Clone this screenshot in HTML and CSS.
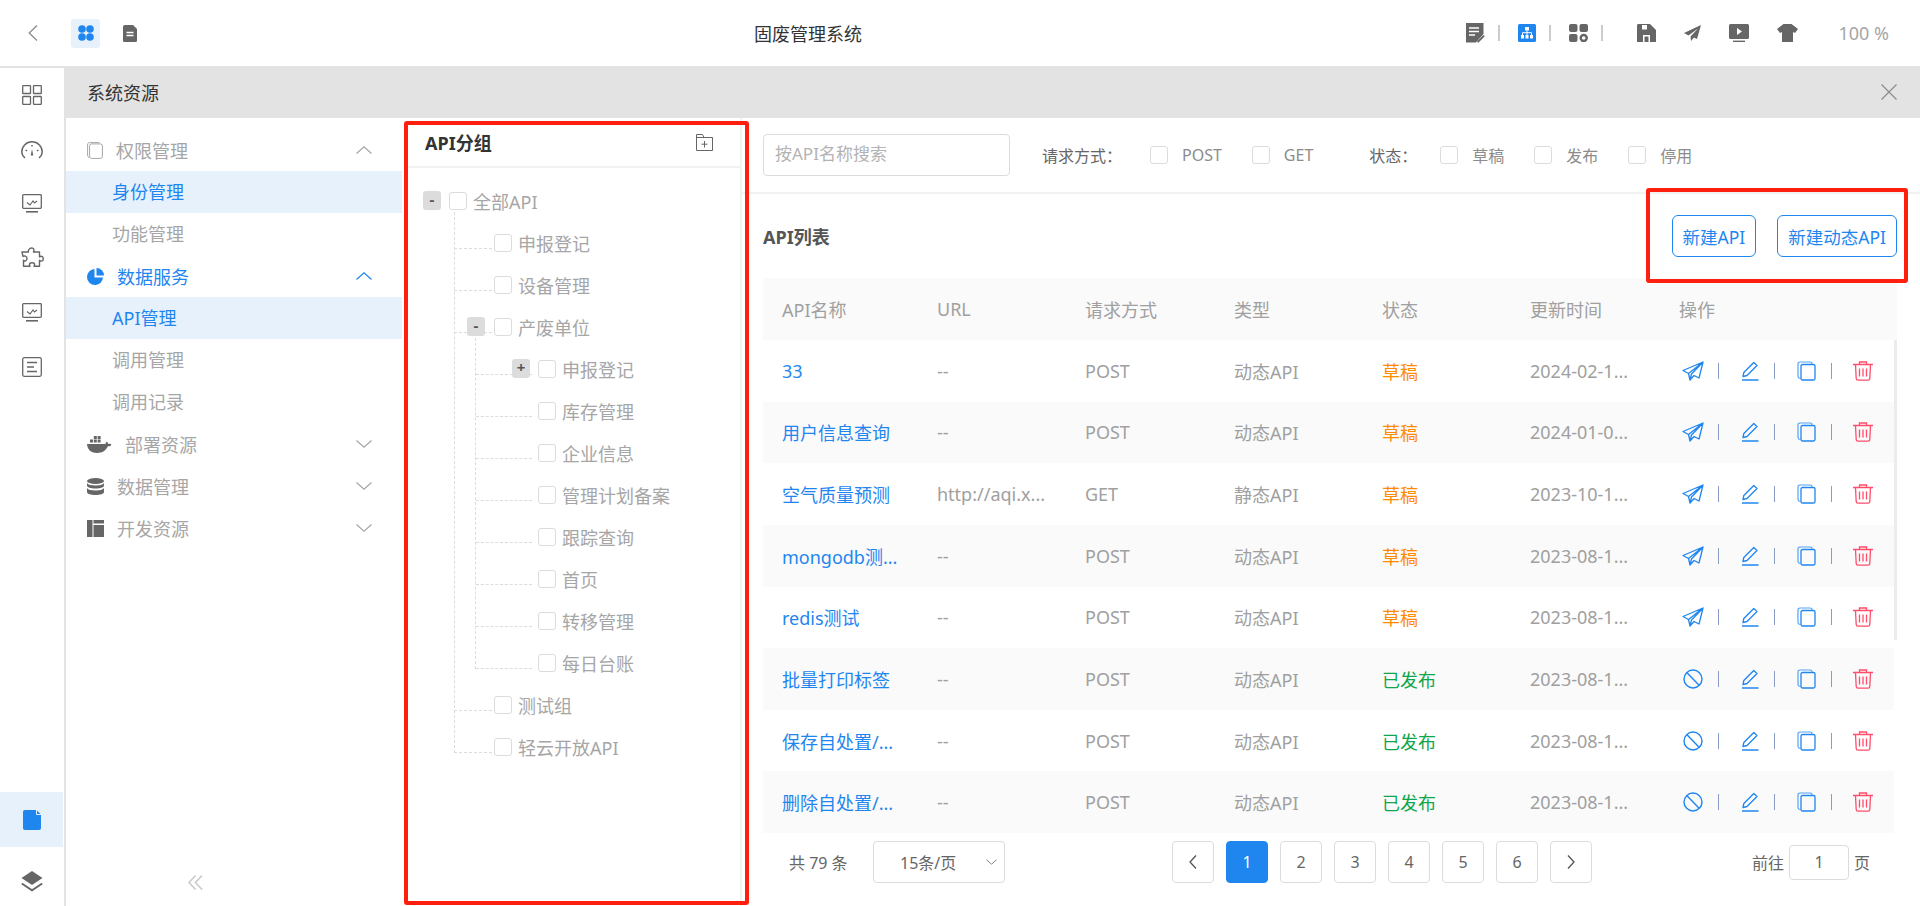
FILE: index.html
```html
<!DOCTYPE html>
<html>
<head>
  <meta charset="utf-8">
  <title>固废管理系统</title>
  <link rel="stylesheet" href="styles.css">
</head>
<body>
  <!-- shared row icons -->
  <svg class="defs" aria-hidden="true">
    <symbol id="i-send" viewBox="0 0 22 20"><path d="M21 1 1 9.500l5.500 3L8 19l4-4.500 5 2.500zM21 1 6.500 12.500 8 19l1.500-6z" fill="none" stroke="currentColor" stroke-width="1.300" stroke-linejoin="round"/></symbol>
    <symbol id="i-ban" viewBox="0 0 20 20"><circle cx="10" cy="10" r="9" fill="none" stroke="currentColor" stroke-width="1.400"/><path d="m3.800 3.500 12.500 13" stroke="currentColor" stroke-width="1.400"/></symbol>
    <symbol id="i-edit" viewBox="0 0 17 20"><path d="M11.800 1.500 15 4.500 5 14.500l-4 1 .8-4zM0 19h16.500" fill="none" stroke="currentColor" stroke-width="1.300" stroke-linejoin="round"/></symbol>
    <symbol id="i-copy" viewBox="0 0 19 20"><path d="M3.500 17.500C1.800 17.500 1 16.700 1 15V3c0-1.400.8-2 2-2h10c1.400 0 2 .7 2 1.700" fill="none" stroke="currentColor" stroke-width="1.200" opacity=".75"/><rect x="4" y="3.500" width="14" height="15.500" rx="1.500" fill="none" stroke="currentColor" stroke-width="1.300"/></symbol>
    <symbol id="i-trash" viewBox="0 0 22 20"><path d="M1 3.500h20M7.500 3.500V1h7v2.500M3.500 3.500l.7 14c0 1 .7 1.700 1.800 1.700h10c1.100 0 1.800-.7 1.800-1.700l.7-14M7.500 7.500v8M11 7.500v8M14.500 7.500v8" fill="none" stroke="currentColor" stroke-width="1.300"/></symbol>
    <symbol id="i-up" viewBox="0 0 16 8"><path d="M.5 7.500 8 .8l7.500 6.700" fill="none" stroke="currentColor" stroke-width="1.200"/></symbol>
    <symbol id="i-down" viewBox="0 0 16 8"><path d="M.5.5 8 7.200 15.500.5" fill="none" stroke="currentColor" stroke-width="1.200"/></symbol>
  </svg>

  <!-- top bar -->
  <header class="topbar">
    <div class="top-left">
      <svg class="back" width="10" height="16" viewBox="0 0 10 16"><path d="M9 .5 1.200 8 9 15.500" fill="none" stroke="#8c8c8c" stroke-width="1.300"/></svg>
      <div class="tab-on">
        <svg width="16" height="16" viewBox="0 0 16 16" fill="#1f86f0"><circle cx="4" cy="4" r="3.800"/><circle cx="12" cy="4" r="3.800"/><circle cx="4" cy="12" r="3.800"/><circle cx="12" cy="12" r="3.800"/></svg>
      </div>
      <svg class="tab-doc" width="14" height="17" viewBox="0 0 14 17"><path d="M2 0h8l4 4v11.500c0 1-.6 1.500-1.500 1.500h-11C.6 17 0 16.500 0 15.500V2C0 .8.800 0 2 0z" fill="#666"/><path d="M3.500 7.500h7M3.500 10.500h7" stroke="#fff" stroke-width="1.400"/></svg>
    </div>
    <div class="top-title">固废管理系统</div>
    <div class="top-right">
      <svg width="19" height="20" viewBox="0 0 19 20"><path d="M0 0h17.500v11L10 19.500H0z" fill="#666"/><path d="M3 5h10M3 8.500h10M3 12h6" stroke="#fff" stroke-width="1.300"/><path d="m11 18.500 6.500-6.500 1.300 1.300-6.500 6.500z" fill="#666"/></svg>
      <i class="top-sep"></i>
      <svg width="18" height="18" viewBox="0 0 18 18"><rect width="18" height="18" rx="1.500" fill="#1f86f0"/><path d="M7 3h4v3.500H7zM3 11h3v3.500H3zM7.500 11h3v3.500h-3zM12 11h3v3.500h-3z" fill="#fff"/><path d="M9 6.500V11M4.500 11V8.700h9V11" fill="none" stroke="#fff"/></svg>
      <i class="top-sep"></i>
      <svg width="19" height="18" viewBox="0 0 19 18" fill="#666"><rect width="8.500" height="8" rx="2"/><rect x="10.500" width="8.500" height="8" rx="2"/><rect y="10" width="8.500" height="8" rx="2"/><circle cx="14.700" cy="14" r="3" fill="none" stroke="#666" stroke-width="2.400"/></svg>
      <i class="top-sep"></i>
      <svg class="top-gap" width="19" height="18" viewBox="0 0 19 18"><path d="M0 1.500C0 .5.500 0 1.500 0H13l6 6v12H0z" fill="#666"/><path d="M5 1v4.500h5V1z" fill="#fff"/><path d="M6 18v-7h7v7z" fill="#fff"/><path d="M7.500 18v-5.500h4V18z" fill="#666"/></svg>
      <svg width="17" height="16" viewBox="0 0 17 16"><path d="M17 0 0 8l4.500 2.500L14 3.500 6.500 11.500 7 16l3-3.500 3 1.500z" fill="#666"/></svg>
      <svg width="20" height="18" viewBox="0 0 20 18"><rect width="20" height="15" rx="1.500" fill="#666"/><path d="M8 4v7l5-3.500z" fill="#fff"/><path d="M4 17.300h12" stroke="#666" stroke-width="1.400"/></svg>
      <svg width="21" height="18" viewBox="0 0 21 18"><path d="M6.500 0h8L21 5l-3 4-2-1v10H5V8L3 9 0 5z" fill="#666"/></svg>
      <span class="zoom-val">100 %</span>
    </div>
  </header>

  <div class="main">
    <!-- left icon rail -->
    <nav class="rail">
      <div class="rail-item">
        <svg width="20" height="20" viewBox="0 0 20 20" fill="none" stroke="#666" stroke-width="1.300"><rect x=".7" y=".7" width="7.800" height="7.800" rx=".6"/><rect x="11.500" y=".7" width="7.800" height="7.800" rx=".6"/><rect x=".7" y="11.500" width="7.800" height="7.800" rx=".6"/><rect x="11.500" y="11.500" width="7.800" height="7.800" rx=".6"/></svg>
      </div>
      <div class="rail-item">
        <svg width="22" height="18" viewBox="0 0 22 18" fill="none" stroke="#666" stroke-width="1.400"><path d="M4 17C1.800 15.200.8 13 .8 11 .8 5.400 5.400.8 11 .8S21.200 5.400 21.200 11c0 2-1 4.200-3.200 6"/><path d="M11 4v1.500M4.500 9 6 10M17.500 9 16 10"/><path d="M11 8l1.300 6.500h-2.600z" fill="#666" stroke="none"/></svg>
      </div>
      <div class="rail-item">
        <svg width="20" height="19" viewBox="0 0 20 19" fill="none" stroke="#666" stroke-width="1.300"><rect x=".7" y=".7" width="18.600" height="13.600" rx=".8"/><path d="M5 8.500l3 2.500 3-4 1.500 2 2.500-2" stroke-width="1.200"/><path d="M4 17.800h12" stroke-width="1.600"/></svg>
      </div>
      <div class="rail-item">
        <svg width="23" height="23" viewBox="0 0 23 23"><path d="M9 1.500c1.500-1.200 4-.3 4 1.700 0 .8-.4 1.300-.5 1.800h6v5c.6-.4 1.200-.8 2-.7 2.300.3 2.500 4.500 0 4.800-.8.1-1.500-.3-2-.8v6H13c.4-.5.700-1 .6-1.700-.3-2.400-4.900-2.400-5.100 0-.1.700.2 1.200.5 1.700H2.500v-6c1 1.200 3.500.8 3.500-1.700 0-2.600-2.500-3-4-2.200L1 5h6.500C7 4 7.600 2.600 9 1.500z" fill="none" stroke="#666" stroke-width="1.400" stroke-linejoin="round"/></svg>
      </div>
      <div class="rail-item">
        <svg width="20" height="19" viewBox="0 0 20 19" fill="none" stroke="#666" stroke-width="1.300"><rect x=".7" y=".7" width="18.600" height="13.600" rx=".8"/><path d="M5 8.500l3 2.500 3-4 1.500 2 2.500-2" stroke-width="1.200"/><path d="M4 17.800h12" stroke-width="1.600"/></svg>
      </div>
      <div class="rail-item">
        <svg width="20" height="20" viewBox="0 0 20 20" fill="none" stroke="#666" stroke-width="1.300"><rect x=".7" y=".7" width="18.600" height="18.600" rx="1.500"/><path d="M5 5.500h10M5 10h7M5 14.500h10"/></svg>
      </div>
      <div class="rail-item rail-on">
        <svg width="18" height="20" viewBox="0 0 18 20"><path d="M2 0h11.500L18 4.500V18c0 1.200-.8 2-2 2H2c-1.200 0-2-.8-2-2V2C0 .8.800 0 2 0z" fill="#1f86f0"/><path d="M13.500 0v4.500H18" fill="none" stroke="#e6f1fc"/></svg>
      </div>
      <div class="rail-item rail-last">
        <svg width="22" height="21" viewBox="0 0 22 21"><path d="M11 0 21.500 7 11 14 .5 7z" fill="#666"/><path d="M.8 12.500 11 19.300l10.200-6.800" fill="none" stroke="#666" stroke-width="1.800"/></svg>
      </div>
    </nav>

    <div class="content">
      <div class="page-head">
        <span>系统资源</span>
        <svg width="16" height="16" viewBox="0 0 16 16"><path d="M.5.500l15 15M15.500.500l-15 15" stroke="#8c8c8c" stroke-width="1.200"/></svg>
      </div>

      <div class="page-body">
        <!-- menu -->
        <aside class="menu">
          <div class="menu-group">
            <svg class="menu-icon" width="16" height="17" viewBox="0 0 16 17" fill="none" stroke="#a6a6a6"><path d="M2.500 15.500C1 15 .6 14.500.6 13V3C.6 1.500 1.200.6 2.500.6h10"/><rect x="2.600" y="1.900" width="12.800" height="14.500" rx="2"/></svg>
            <span>权限管理</span>
            <svg class="chev" width="16" height="8"><use href="#i-up"/></svg>
          </div>
          <div class="menu-sub sub-on">身份管理</div>
          <div class="menu-sub">功能管理</div>
          <div class="menu-group group-on">
            <svg class="menu-icon" width="17" height="17" viewBox="0 0 17 17" fill="#1f86f0"><path d="M7.500 1v8.500H16A8 8 0 1 1 7.500 1z"/><path d="M9.500 0A7.500 7.500 0 0 1 17 7.500H9.500z"/></svg>
            <span>数据服务</span>
            <svg class="chev" width="16" height="8"><use href="#i-up"/></svg>
          </div>
          <div class="menu-sub sub-on">API管理</div>
          <div class="menu-sub">调用管理</div>
          <div class="menu-sub">调用记录</div>
          <div class="menu-group">
            <svg class="menu-icon wide" width="25" height="17" viewBox="0 0 25 17"><path d="M0 8h18.500c.3-1.500.8-2 1.500-2.200.6.600 1 1.200 1 2.200 1.300-.5 2.500-.3 3.500.4-.8 1.500-2 2-3.600 1.900C18.900 14.500 15.500 17 10 17 3.500 17 .3 13 0 8z" fill="#666"/><path d="M3 3.500h3v3H3zM6.800 3.500h3v3h-3zM10.600 3.500h3v3h-3zM6.800 0h3v3h-3zM10.600 0h3v3h-3z" fill="#666"/></svg>
            <span>部署资源</span>
            <svg class="chev" width="16" height="8"><use href="#i-down"/></svg>
          </div>
          <div class="menu-group">
            <svg class="menu-icon" width="17" height="17" viewBox="0 0 17 17" fill="#666"><ellipse cx="8.500" cy="3" rx="8.500" ry="3"/><path d="M0 5c1 1.800 4.500 2.500 8.500 2.500S16 6.800 17 5v2.500c0 1.800-3.800 3-8.500 3S0 9.300 0 7.500zM0 10c1 1.800 4.500 2.500 8.500 2.500S16 11.800 17 10v4c0 1.800-3.800 3-8.500 3S0 15.800 0 14z"/></svg>
            <span>数据管理</span>
            <svg class="chev" width="16" height="8"><use href="#i-down"/></svg>
          </div>
          <div class="menu-group">
            <svg class="menu-icon" width="17" height="17" viewBox="0 0 17 17" fill="#666"><path d="M0 0h5.500v17H0zM6.500 0H17v3.500H6.500zM6.500 5H17v12H6.500z"/></svg>
            <span>开发资源</span>
            <svg class="chev" width="16" height="8"><use href="#i-down"/></svg>
          </div>
          <div class="menu-fold">
            <svg width="15" height="15" viewBox="0 0 15 15" fill="none" stroke="#c8c8c8" stroke-width="1.500"><path d="M7.500.500 1 7.500l6.500 7M14 .500l-6.500 7 6.500 7"/></svg>
          </div>
        </aside>

        <!-- tree of API groups -->
        <section class="tree-panel">
          <div class="tree-head">
            <span>API分组</span>
            <svg width="17" height="17" viewBox="0 0 17 17" fill="none" stroke="#666"><path d="M.5 16.500V.5h6l1.500 3h8.500v13z"/><path d="M.5 3.500H8M8.500 7v6.500M5.500 10.200h6" stroke-width="1"/></svg>
          </div>
          <div class="tree">
            <div class="node"><b class="toggle">-</b><i class="chk"></i>全部API</div>
            <div class="branch lvl1">
              <div class="node"><i class="chk"></i>申报登记</div>
              <div class="node"><i class="chk"></i>设备管理</div>
              <div class="node"><b class="toggle">-</b><i class="chk"></i>产废单位</div>
              <div class="branch lvl2">
                <div class="node"><b class="toggle">+</b><i class="chk"></i>申报登记</div>
                <div class="node"><i class="chk"></i>库存管理</div>
                <div class="node"><i class="chk"></i>企业信息</div>
                <div class="node"><i class="chk"></i>管理计划备案</div>
                <div class="node"><i class="chk"></i>跟踪查询</div>
                <div class="node"><i class="chk"></i>首页</div>
                <div class="node"><i class="chk"></i>转移管理</div>
                <div class="node"><i class="chk"></i>每日台账</div>
              </div>
              <div class="node"><i class="chk"></i>测试组</div>
              <div class="node"><i class="chk"></i>轻云开放API</div>
            </div>
          </div>
        </section>

        <!-- API list -->
        <section class="api-panel">
          <div class="filters">
            <div class="search">按API名称搜索</div>
            <span class="f-label">请求方式：</span>
            <label class="f-opt"><i class="chk"></i>POST</label>
            <label class="f-opt"><i class="chk"></i>GET</label>
            <span class="f-label f-state">状态：</span>
            <label class="f-opt"><i class="chk"></i>草稿</label>
            <label class="f-opt"><i class="chk"></i>发布</label>
            <label class="f-opt"><i class="chk"></i>停用</label>
          </div>

          <div class="list-head">
            <span class="list-title">API列表</span>
            <div class="list-btns">
              <button class="btn">新建API</button>
              <button class="btn">新建动态API</button>
            </div>
          </div>

          <div class="table">
            <div class="t-row t-head"><div>API名称</div><div>URL</div><div>请求方式</div><div>类型</div><div>状态</div><div>更新时间</div><div>操作</div></div>
            <div class="t-body">
              <div class="t-row">
                <div class="link">33</div><div>--</div><div>POST</div><div>动态API</div><div class="draft">草稿</div><div>2024-02-1...</div>
                <div class="acts"><svg class="a-main"><use href="#i-send"/></svg><i class="a-sep"></i><svg class="a-edit"><use href="#i-edit"/></svg><i class="a-sep"></i><svg class="a-copy"><use href="#i-copy"/></svg><i class="a-sep"></i><svg class="a-del"><use href="#i-trash"/></svg></div>
              </div>
              <div class="t-row">
                <div class="link">用户信息查询</div><div>--</div><div>POST</div><div>动态API</div><div class="draft">草稿</div><div>2024-01-0...</div>
                <div class="acts"><svg class="a-main"><use href="#i-send"/></svg><i class="a-sep"></i><svg class="a-edit"><use href="#i-edit"/></svg><i class="a-sep"></i><svg class="a-copy"><use href="#i-copy"/></svg><i class="a-sep"></i><svg class="a-del"><use href="#i-trash"/></svg></div>
              </div>
              <div class="t-row">
                <div class="link">空气质量预测</div><div>http://aqi.x...</div><div>GET</div><div>静态API</div><div class="draft">草稿</div><div>2023-10-1...</div>
                <div class="acts"><svg class="a-main"><use href="#i-send"/></svg><i class="a-sep"></i><svg class="a-edit"><use href="#i-edit"/></svg><i class="a-sep"></i><svg class="a-copy"><use href="#i-copy"/></svg><i class="a-sep"></i><svg class="a-del"><use href="#i-trash"/></svg></div>
              </div>
              <div class="t-row">
                <div class="link">mongodb测...</div><div>--</div><div>POST</div><div>动态API</div><div class="draft">草稿</div><div>2023-08-1...</div>
                <div class="acts"><svg class="a-main"><use href="#i-send"/></svg><i class="a-sep"></i><svg class="a-edit"><use href="#i-edit"/></svg><i class="a-sep"></i><svg class="a-copy"><use href="#i-copy"/></svg><i class="a-sep"></i><svg class="a-del"><use href="#i-trash"/></svg></div>
              </div>
              <div class="t-row">
                <div class="link">redis测试</div><div>--</div><div>POST</div><div>动态API</div><div class="draft">草稿</div><div>2023-08-1...</div>
                <div class="acts"><svg class="a-main"><use href="#i-send"/></svg><i class="a-sep"></i><svg class="a-edit"><use href="#i-edit"/></svg><i class="a-sep"></i><svg class="a-copy"><use href="#i-copy"/></svg><i class="a-sep"></i><svg class="a-del"><use href="#i-trash"/></svg></div>
              </div>
              <div class="t-row">
                <div class="link">批量打印标签</div><div>--</div><div>POST</div><div>动态API</div><div class="done">已发布</div><div>2023-08-1...</div>
                <div class="acts"><svg class="a-main"><use href="#i-ban"/></svg><i class="a-sep"></i><svg class="a-edit"><use href="#i-edit"/></svg><i class="a-sep"></i><svg class="a-copy"><use href="#i-copy"/></svg><i class="a-sep"></i><svg class="a-del"><use href="#i-trash"/></svg></div>
              </div>
              <div class="t-row">
                <div class="link">保存自处置/...</div><div>--</div><div>POST</div><div>动态API</div><div class="done">已发布</div><div>2023-08-1...</div>
                <div class="acts"><svg class="a-main"><use href="#i-ban"/></svg><i class="a-sep"></i><svg class="a-edit"><use href="#i-edit"/></svg><i class="a-sep"></i><svg class="a-copy"><use href="#i-copy"/></svg><i class="a-sep"></i><svg class="a-del"><use href="#i-trash"/></svg></div>
              </div>
              <div class="t-row">
                <div class="link">删除自处置/...</div><div>--</div><div>POST</div><div>动态API</div><div class="done">已发布</div><div>2023-08-1...</div>
                <div class="acts"><svg class="a-main"><use href="#i-ban"/></svg><i class="a-sep"></i><svg class="a-edit"><use href="#i-edit"/></svg><i class="a-sep"></i><svg class="a-copy"><use href="#i-copy"/></svg><i class="a-sep"></i><svg class="a-del"><use href="#i-trash"/></svg></div>
              </div>
              <div class="t-scroll"></div>
            </div>
          </div>

          <div class="pager">
            <span class="p-total">共 79 条</span>
            <div class="p-size">15条/页<svg width="11" height="6" viewBox="0 0 16 8"><use href="#i-down"/></svg></div>
            <div class="p-nums">
              <div class="p-btn"><svg width="8" height="14" viewBox="0 0 8 14"><path d="M7 .5 1 7l6 6.500" fill="none" stroke="#555" stroke-width="1.300"/></svg></div>
              <div class="p-btn p-on">1</div>
              <div class="p-btn">2</div>
              <div class="p-btn">3</div>
              <div class="p-btn">4</div>
              <div class="p-btn">5</div>
              <div class="p-btn">6</div>
              <div class="p-btn"><svg width="8" height="14" viewBox="0 0 8 14"><path d="M1 .5 7 7l-6 6.500" fill="none" stroke="#555" stroke-width="1.300"/></svg></div>
            </div>
            <div class="p-goto">前往<span class="p-input">1</span>页</div>
          </div>
        </section>

        <!-- red annotation boxes -->
        <div class="mark mark-tree"></div>
        <div class="mark mark-btns"></div>
      </div>
    </div>
  </div>
</body>
</html>
```

FILE: styles.css
```css
* {
  margin: 0;
  padding: 0;
  box-sizing: border-box;
}

body {
  width: 1920px;
  height: 906px;
  overflow: hidden;
  display: flex;
  flex-direction: column;
  background-color: #fff;
  font-family: "Noto Sans", "Noto Sans CJK SC", sans-serif;
  font-size: 18px;
  color: #a6a6a6;
}

i, b {
  font-style: normal;
}

svg {
  display: block;
  flex-shrink: 0;
}

.defs {
  position: absolute;
  width: 0;
  height: 0;
}

/* top bar */
.topbar {
  height: 66px;
  display: flex;
  align-items: center;
}

.top-left {
  width: 754px;
  display: flex;
  align-items: center;
  padding-left: 28px;
}

.back {
  margin-right: 33px;
}

.tab-on {
  width: 29px;
  height: 29px;
  border-radius: 3px;
  background-color: #e6f1fc;
  display: flex;
  align-items: center;
  justify-content: center;
  margin-right: 23px;
}

.top-title {
  color: #333;
}

.top-right {
  margin-left: auto;
  display: flex;
  align-items: center;
  padding-right: 31px;
  gap: 28px;
}

.top-right svg:nth-child(1),
.top-right svg:nth-child(3),
.top-right svg:nth-child(5) {
  margin-right: -15px;
}

.top-sep {
  width: 2px;
  height: 16px;
  background-color: #ccc;
  margin-right: -10px;
}

.top-gap {
  margin-left: 16px;
}

.zoom-val {
  margin-left: 12px;
}

/* main area */
.main {
  flex: 1;
  display: flex;
  min-height: 0;
}

.rail {
  width: 66px;
  border-top: 2px solid #e3e3e3;
  border-right: 2px solid #e3e3e3;
  display: flex;
  flex-direction: column;
}

.rail-item {
  height: 54.400px;
  display: flex;
  align-items: center;
  justify-content: center;
}

.rail-on {
  margin-top: auto;
  height: 55px;
  margin-right: 1px;
  background-color: #e6f1fc;
}

.rail-last {
  height: 59px;
  padding-top: 10px;
}

.content {
  flex: 1;
  min-width: 0;
  margin-left: -2px;
  display: flex;
  flex-direction: column;
}

.page-head {
  height: 52px;
  background-color: #e3e3e3;
  color: #333;
  display: flex;
  align-items: center;
  justify-content: space-between;
  padding: 0 23px 0 23px;
}

.page-body {
  flex: 1;
  min-height: 0;
  display: flex;
  position: relative;
  padding-left: 2px;
}

/* menu */
.menu {
  width: 336px;
  padding-top: 11px;
  display: flex;
  flex-direction: column;
}

.menu-group {
  height: 42px;
  display: flex;
  align-items: center;
  padding: 0 30px 0 21px;
  position: relative;
}

.menu-group span {
  margin-left: 13px;
}

.menu-icon.wide {
  margin-right: 7px;
}

.menu-icon.wide + span {
  margin-left: 6px;
}

.chev {
  margin-left: auto;
  color: #a6a6a6;
}

.group-on {
  color: #1f86f0;
}

.group-on .chev {
  color: #1f86f0;
}

.menu-sub {
  height: 42px;
  line-height: 42px;
  padding-left: 46px;
}

.sub-on {
  background-color: #e6f1fc;
  color: #1f86f0;
}

.menu-fold {
  margin-top: auto;
  padding: 0 0 16px 122px;
}

/* tree panel */
.tree-panel {
  width: 338px;
  margin-left: 2px;
  border-right: 2px solid #f2f2f2;
}

.tree-head {
  height: 50px;
  border-bottom: 2px solid #f2f2f2;
  display: flex;
  align-items: center;
  justify-content: space-between;
  padding: 0 27px 0 21px;
  color: #333;
  font-weight: 700;
}

.tree {
  padding-top: 12px;
}

.node {
  height: 42px;
  display: flex;
  align-items: center;
  position: relative;
  padding-left: 45px;
}

.chk {
  width: 18px;
  height: 18px;
  border: 1px solid #dcdcdc;
  border-radius: 3px;
  background-color: #fff;
  margin-right: 6px;
  flex-shrink: 0;
  position: relative;
}

.toggle {
  position: absolute;
  left: 19px;
  top: 11px;
  z-index: 1;
  width: 18px;
  height: 19px;
  line-height: 17px;
  border-radius: 3px;
  background-color: #dcdcdc;
  color: #555;
  font-size: 15px;
  text-align: center;
}

.branch {
  position: relative;
}

/* dashed connectors */
.branch::before {
  content: "";
  position: absolute;
  top: -10px;
  border-left: 1px dashed #dcdcdc;
}

.branch > .node::before {
  content: "";
  position: absolute;
  top: 26px;
  height: 0;
  border-top: 1px dashed #dcdcdc;
}

.lvl1 {
  padding-left: 0;
}

.lvl1::before {
  left: 50px;
  bottom: 15px;
}

.lvl1 > .node {
  padding-left: 90px;
}

.lvl1 > .node::before {
  left: 50px;
  width: 38px;
}

.lvl1 > .node .toggle {
  left: 63px;
}

.lvl2::before {
  left: 71px;
  bottom: 15px;
}

.lvl2 > .node {
  padding-left: 134px;
}

.lvl2 > .node::before {
  left: 72px;
  width: 56px;
}

.lvl2 > .node .toggle {
  left: 108px;
}

/* api panel */
.api-panel {
  flex: 1;
  min-width: 0;
  display: flex;
  flex-direction: column;
}

.filters {
  height: 76px;
  border-bottom: 2px solid #f2f2f2;
  display: flex;
  align-items: center;
  padding-left: 21px;
  font-size: 16px;
  color: #8c8c8c;
}

.search {
  width: 247px;
  height: 42px;
  line-height: 38px;
  border: 1px solid #dcdcdc;
  border-radius: 4px;
  padding-left: 11px;
  color: #b3b3b3;
  font-size: 17px;
  margin-right: 32px;
}

.f-label {
  width: 108px;
  color: #666;
}

.f-state {
  width: 71px;
  margin-left: 26px;
}

.f-opt {
  display: flex;
  align-items: center;
  margin-right: 30px;
}

.f-opt .chk {
  margin-right: 14px;
}

.list-head {
  height: 84px;
  display: flex;
  align-items: center;
  justify-content: space-between;
  padding: 0 23px 0 21px;
}

.list-title {
  color: #555;
  font-weight: 700;
}

.list-btns {
  display: flex;
  gap: 21px;
}

.btn {
  height: 42px;
  padding: 0 10px;
  border: 1px solid #1f86f0;
  border-radius: 6px;
  background-color: #fff;
  color: #1f86f0;
  font-family: inherit;
  font-size: 17.500px;
}

/* table */
.table {
  margin: 0 23px 0 21px;
}

.t-row {
  display: grid;
  grid-template-columns: 155px 148px 149px 148px 148px 149px 1fr;
  align-items: center;
  height: 61.625px;
  color: #a0a0a0;
}

.t-row > div {
  padding-left: 19px;
  white-space: nowrap;
}

.t-head {
  height: 62px;
  background-color: #fafafa;
}

.t-body {
  position: relative;
  margin-right: 3px;
}

.t-body .t-row:nth-child(even) {
  background-color: #fafafa;
}

.t-scroll {
  position: absolute;
  top: 0;
  right: -3px;
  width: 3px;
  height: 300px;
  background-color: #ececec;
}

.link {
  color: #1f86f0;
}

.draft {
  color: #ff8c00;
}

.done {
  color: #0fa64b;
}

.t-row > .acts {
  display: flex;
  align-items: center;
  padding-left: 22px;
}

.acts svg {
  height: 20px;
}

.a-main {
  width: 22px;
  margin-right: 14px;
  color: #1f86f0;
}

.a-sep {
  width: 1px;
  height: 16px;
  background-color: #8a9bc4;
}

.a-edit {
  width: 17px;
  margin: 0 15px 0 23px;
  color: #1f86f0;
}

.a-copy {
  width: 19px;
  margin: 0 15px 0 22px;
  color: #1f86f0;
}

.a-del {
  width: 22px;
  margin-left: 20px;
  color: #ff4d6a;
}

/* pager */
.pager {
  flex: 1;
  display: flex;
  align-items: center;
  padding: 0 50px 15px 47px;
  font-size: 16px;
  color: #666;
}

.p-total {
  width: 84px;
}

.p-size {
  width: 132px;
  height: 42px;
  border: 1px solid #dcdcdc;
  border-radius: 4px;
  display: flex;
  align-items: center;
  justify-content: space-between;
  padding: 0 7px 0 26px;
}

.p-nums {
  display: flex;
  gap: 12px;
  margin-left: 167px;
}

.p-btn {
  width: 42px;
  height: 42px;
  border: 1px solid #dcdcdc;
  border-radius: 4px;
  display: flex;
  align-items: center;
  justify-content: center;
}

.p-on {
  background-color: #1f86f0;
  border-color: #1f86f0;
  color: #fff;
}

.p-goto {
  margin-left: auto;
  display: flex;
  align-items: center;
  gap: 5px;
}

.p-input {
  width: 60px;
  height: 35px;
  line-height: 33px;
  border: 1px solid #dcdcdc;
  border-radius: 4px;
  text-align: center;
}

/* red annotation boxes */
.mark {
  position: absolute;
  border: 4px solid #ff1f0f;
  border-radius: 3px;
  pointer-events: none;
}

.mark-tree {
  left: 340px;
  top: 3px;
  width: 345px;
  height: 784px;
}

.mark-btns {
  left: 1582px;
  top: 70px;
  width: 262px;
  height: 95px;
}
```
